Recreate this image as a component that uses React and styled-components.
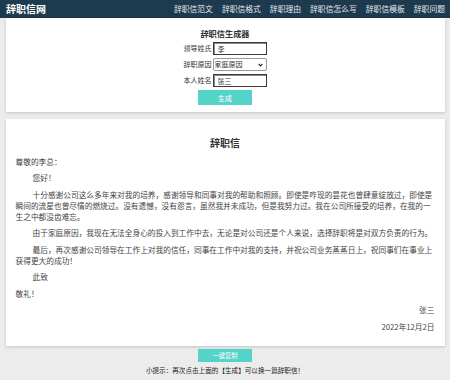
import { styled, createGlobalStyle } from "styled-components";

const GlobalStyle = createGlobalStyle`
  body {
    margin: 0;
    background: #ececec;
    font-family: "Noto Sans CJK SC", "Noto Sans", sans-serif;
    color: #444;
  }
`;

const Header = styled.header`
  height: 18px;
  background: #1e3a4e;
  display: flex;
  align-items: center;
  justify-content: space-between;
  padding: 0 5px 0 6px;
`;

const Logo = styled.div`
  color: #fff;
  font-size: 10px;
  font-weight: 700;
  line-height: 18px;
`;

const Nav = styled.nav`
  display: flex;
  gap: 9px;
`;

const NavLink = styled.a`
  color: #e6e9ec;
  font-size: 7.8px;
  line-height: 18px;
  text-decoration: none;
`;

const Card = styled.section`
  width: 439px;
  margin: ${(p) => (p.$first ? "0 auto" : "7px auto 0")};
  background: #fff;
  box-shadow: 0 1px 3px rgba(0, 0, 0, 0.18);
  box-sizing: border-box;
`;

const GeneratorCard = styled(Card)`
  padding: 10px 0 7px;
  display: flex;
  flex-direction: column;
  align-items: center;
`;

const SmallTitle = styled.h2`
  margin: 0 0 4px;
  font-size: 8.2px;
  line-height: 10px;
  font-weight: 700;
  color: #333;
`;

const Form = styled.form`
  display: grid;
  grid-template-columns: auto 54px;
  column-gap: 1px;
  row-gap: 3px;
  align-items: center;
`;

const Label = styled.label`
  font-size: 7px;
  color: #333;
  text-align: right;
  line-height: 13px;
`;

const Input = styled.input`
  display: block;
  box-sizing: border-box;
  width: 54px;
  height: 13px;
  margin: 0;
  padding: 0 4px;
  border: 1px solid #3a3a3a;
  box-shadow: inset 1px 1px 0 #888;
  font-family: inherit;
  font-size: 7px;
  color: #333;
  outline: none;
`;

const SelectWrap = styled.div`
  position: relative;
  width: 54px;
  height: 13px;

  svg {
    position: absolute;
    right: 4px;
    top: 4.5px;
    pointer-events: none;
  }
`;

const Select = styled.select`
  appearance: none;
  display: block;
  box-sizing: border-box;
  width: 54px;
  height: 13px;
  margin: 0;
  padding: 0 1px;
  border: 1px solid #999;
  border-radius: 2px;
  font-family: inherit;
  font-size: 7px;
  line-height: 11px;
  color: #333;
  background: #fff;
`;

const Button = styled.button`
  display: block;
  width: 54px;
  height: ${(p) => p.$h}px;
  margin: ${(p) => p.$m};
  padding: 0;
  border: none;
  background: #54d3c8;
  color: #fff;
  font-family: inherit;
  font-size: ${(p) => p.$fs}px;
  cursor: pointer;
`;

const LetterCard = styled(Card)`
  padding: 17px 10px 14.5px;
`;

const LetterTitle = styled.h1`
  margin: 0 0 5.5px;
  text-align: center;
  font-size: 10px;
  line-height: 14px;
  font-weight: 700;
  color: #333;
`;

const Para = styled.p`
  margin: 0 0 5.5px;
  font-size: 7.7px;
  line-height: 11px;
  text-indent: ${(p) => (p.$indent ? "17px" : "0")};
  text-align: ${(p) => (p.$right ? "right" : "left")};
  &:last-child {
    margin-bottom: 0;
  }
`;

const Footer = styled.div`
  display: flex;
  flex-direction: column;
  align-items: center;
  padding-top: 3px;
`;

const Tip = styled.p`
  margin: 3.5px 0 0;
  font-size: 6.6px;
  line-height: 9px;
  color: #222;
`;

const navItems = ["辞职信范文", "辞职信格式", "辞职理由", "辞职信怎么写", "辞职信模板", "辞职问题"];

export default function App() {
  return (
    <>
      <GlobalStyle />
      <Header>
        <Logo>辞职信网</Logo>
        <Nav>
          {navItems.map((n) => (
            <NavLink key={n} href="#">
              {n}
            </NavLink>
          ))}
        </Nav>
      </Header>

      <GeneratorCard $first>
        <SmallTitle>辞职信生成器</SmallTitle>
        <Form onSubmit={(e) => e.preventDefault()}>
          <Label>领导姓氏</Label>
          <Input type="text" defaultValue="李" />
          <Label>辞职原因</Label>
          <SelectWrap>
            <Select defaultValue="家庭原因">
              <option>家庭原因</option>
              <option>个人原因</option>
              <option>身体原因</option>
            </Select>
            <svg width="5" height="4" viewBox="0 0 5 4">
              <path d="M0.6 0.8 L2.5 2.9 L4.4 0.8" fill="none" stroke="#222" strokeWidth="1.1" />
            </svg>
          </SelectWrap>
          <Label>本人姓名</Label>
          <Input type="text" defaultValue="张三" />
        </Form>
        <Button type="button" $h={15} $m="3px 0 0" $fs={7}>
          生成
        </Button>
      </GeneratorCard>

      <LetterCard>
        <LetterTitle>辞职信</LetterTitle>
        <Para>尊敬的李总：</Para>
        <Para $indent>您好！</Para>
        <Para $indent>
          十分感谢公司这么多年来对我的培养，感谢领导和同事对我的帮助和照顾。即使是咋现的昙花也曾肆意绽放过，即使是瞬间的流星也曾尽情的燃烧过。没有遗憾，没有怨言，虽然我并未成功，但是我努力过。我在公司所接受的培养，在我的一生之中都没齿难忘。
        </Para>
        <Para $indent>
          由于家庭原因，我现在无法全身心的投入到工作中去，无论是对公司还是个人来说，选择辞职将是对双方负责的行为。
        </Para>
        <Para $indent>
          最后，再次感谢公司领导在工作上对我的信任，同事在工作中对我的支持，并祝公司业务蒸蒸日上，祝同事们在事业上获得更大的成功！
        </Para>
        <Para $indent>此致</Para>
        <Para>敬礼！</Para>
        <Para $right>张三</Para>
        <Para $right>2022年12月2日</Para>
      </LetterCard>

      <Footer>
        <Button type="button" $h={13} $m="0" $fs={6.3}>
          一键复制
        </Button>
        <Tip>小提示：再次点击上面的【生成】可以换一篇辞职信！</Tip>
      </Footer>
    </>
  );
}
